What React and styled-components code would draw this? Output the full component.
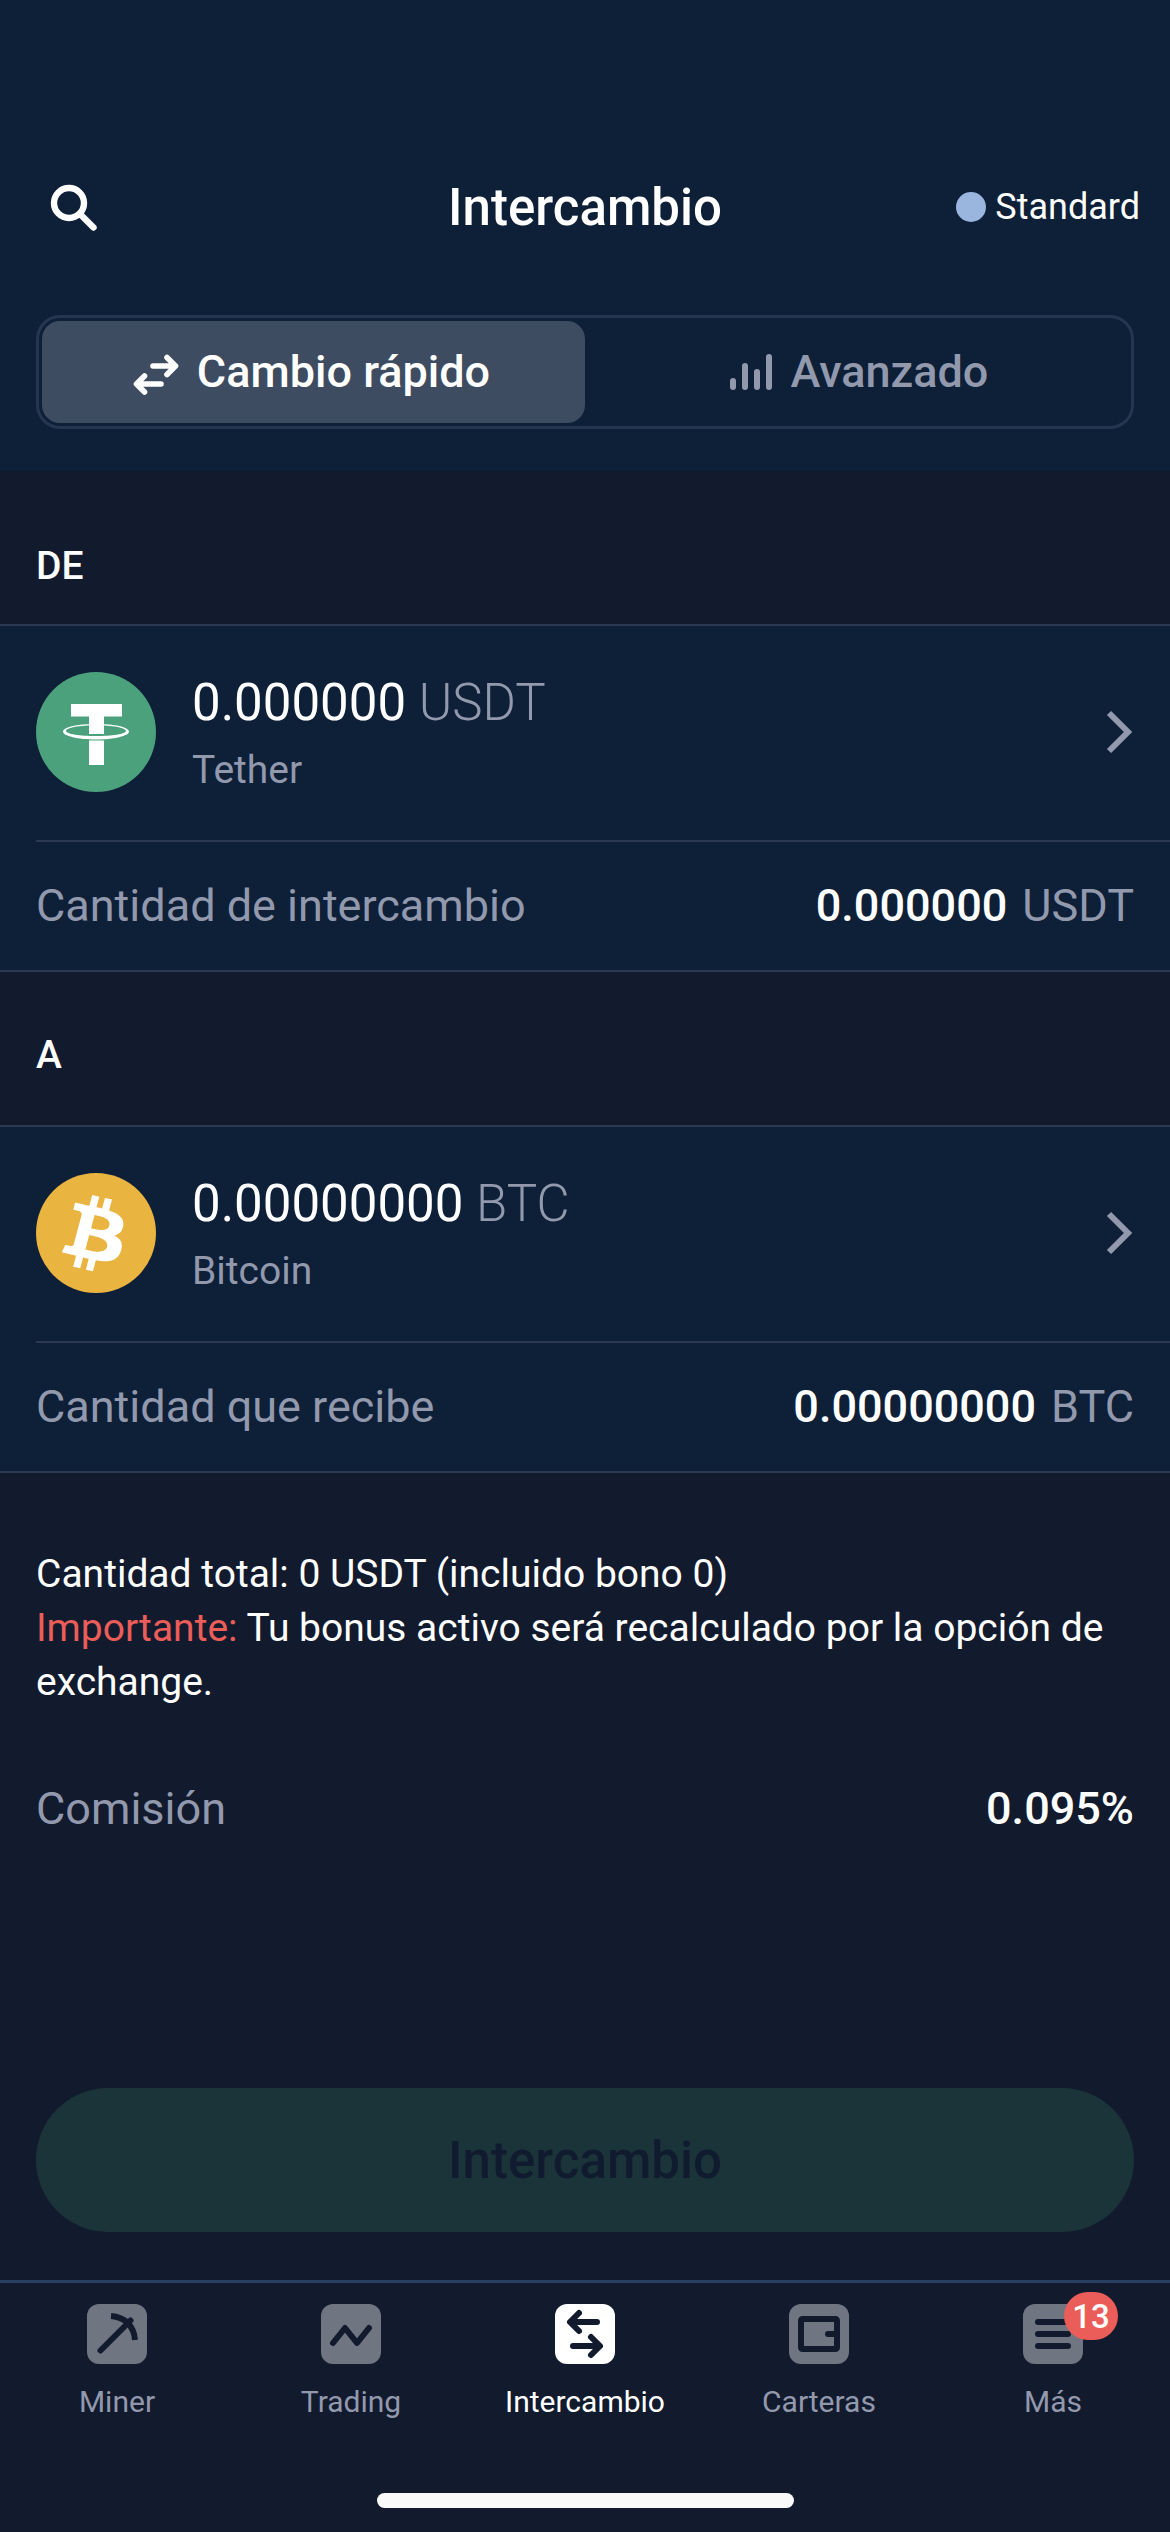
import React from "react"
import styled, { createGlobalStyle } from "styled-components"

const colors = {
  page: "#121a2e",
  panel: "#0e1f38",
  line: "#2b3a52",
  muted: "#9299ad",
  white: "#ffffff",
  red: "#eb5d58",
}

const GlobalStyle = createGlobalStyle`
  * {
    box-sizing: border-box;
  }
  body {
    margin: 0;
    background: ${colors.page};
    color: ${colors.white};
    font-family: Roboto, sans-serif;
  }
  svg {
    display: block;
    flex: none;
  }
`

const Screen = styled.div`
  width: 1170px;
  height: 2532px;
  display: flex;
  flex-direction: column;
  background: ${colors.page};
  overflow: hidden;
`
const Header = styled.header`
  height: 471px;
  padding: 141px 36px 42px;
  display: flex;
  flex-direction: column;
  justify-content: space-between;
  background: ${colors.panel};
`
const TitleBar = styled.div`
  height: 132px;
  display: grid;
  grid-template-columns: 1fr auto 1fr;
  align-items: center;
`
const SearchButton = styled.button`
  padding: 0 0 0 12px;
  border: 0;
  background: none;
  color: inherit;
`
const Title = styled.h1`
  margin: 0;
  padding-top: 2px;
  font-size: 51px;
  line-height: 60px;
  font-weight: 500;
`
const Plan = styled.div`
  display: flex;
  align-items: center;
  justify-content: flex-end;
  gap: 9px;
  margin-right: -6px;
  font-size: 36px;
  line-height: 42px;
`
const PlanDot = styled.span`
  width: 30px;
  height: 30px;
  border-radius: 50%;
  background: #9ab6df;
`
const Segments = styled.div`
  height: 114px;
  padding: 3px;
  display: grid;
  grid-template-columns: 1fr 1fr;
  border: 3px solid #253650;
  border-radius: 24px;
`
const Segment = styled.button`
  display: flex;
  align-items: center;
  justify-content: center;
  gap: 18px;
  padding: ${(p) => (p.$active ? "0 4px 0 0" : "0 0 0 5px")};
  border: 0;
  border-radius: 18px;
  background: ${(p) => (p.$active ? "#3e4c61" : "transparent")};
  color: ${(p) => (p.$active ? colors.white : colors.muted)};
  font: 500 45px/54px Roboto, sans-serif;
`
const SectionTitle = styled.h2`
  margin: 0;
  height: 153px;
  padding: ${(p) => p.$top}px 36px 0;
  font-size: 39px;
  line-height: 46px;
  font-weight: 500;
`
const Panel = styled.section`
  height: 348px;
  padding-left: 36px;
  border-top: 2px solid ${colors.line};
  border-bottom: 2px solid ${colors.line};
  background: ${colors.panel};
`
const CoinRow = styled.div`
  height: 216px;
  padding: 0 36px 2px 0;
  display: flex;
  align-items: center;
  gap: 36px;
  border-bottom: 2px solid ${colors.line};
`
const CoinText = styled.div`
  flex: 1;
  padding-top: 5px;
`
const Balance = styled.div`
  font-size: 51px;
  line-height: 60px;
  white-space: pre;
`
const Ticker = styled.span`
  color: ${colors.muted};
  font-weight: ${(p) => p.$weight || 400};
`
const CoinName = styled.div`
  margin-top: 10px;
  color: ${colors.muted};
  font-size: 39px;
  line-height: 54px;
`
const ValueRow = styled.div`
  height: 128px;
  padding-right: 36px;
  display: flex;
  align-items: center;
  justify-content: space-between;
  font-size: 45px;
  line-height: 54px;
`
const Label = styled.span`
  color: ${colors.muted};
`
const Value = styled.span`
  display: flex;
  gap: 15px;
  font-weight: 500;
`
const Note = styled.p`
  margin: 0;
  padding: 74px 36px 0;
  font-size: 39px;
  line-height: 54px;
`
const Warning = styled.span`
  color: ${colors.red};
`
const FeeRow = styled(ValueRow)`
  height: 54px;
  margin: 73px 0 0 36px;
`
const SubmitButton = styled.button`
  margin: auto 36px 48px;
  padding: 2px 0 0;
  height: 144px;
  flex: none;
  border: 0;
  border-radius: 72px;
  background: #1b343a;
  color: #111b30;
  font: 500 51px/60px Roboto, sans-serif;
`
const TabBar = styled.nav`
  height: 252px;
  flex: none;
  display: flex;
  flex-direction: column;
  align-items: center;
  justify-content: space-between;
  padding-bottom: 24px;
  border-top: 3px solid #283f62;
`
const Tabs = styled.div`
  width: 100%;
  padding-top: 21px;
  display: grid;
  grid-template-columns: repeat(5, 1fr);
`
const Tab = styled.div`
  display: flex;
  flex-direction: column;
  align-items: center;
  gap: 20px;
  color: ${(p) => (p.$active ? colors.white : colors.muted)};
  font-size: 30px;
  line-height: 36px;
`
const TabIcon = styled.div`
  position: relative;
  width: 60px;
  height: 60px;
  border-radius: 12px;
  background: ${(p) => (p.$active ? colors.white : "#707582")};
  color: ${colors.page};
`
const Badge = styled.span`
  position: absolute;
  top: -12px;
  left: 41px;
  width: 54px;
  height: 48px;
  border-radius: 24px;
  background: ${colors.red};
  color: ${colors.white};
  font-size: 33px;
  line-height: 50px;
  font-weight: 500;
  text-align: center;
`
const HomeIndicator = styled.div`
  width: 417px;
  height: 15px;
  border-radius: 8px;
  background: #f9f9f9;
`

const stroke = {
  fill: "none",
  stroke: "currentColor",
  strokeLinecap: "round",
  strokeLinejoin: "round",
}

const SearchIcon = () => (
  <svg width="51" height="51" viewBox="0 0 51 51" {...stroke}>
    <circle cx="21" cy="21" r="15" strokeWidth="6.4" />
    <path d="M32 32L45.5 45.5" strokeWidth="6.4" />
  </svg>
)

const SwapIcon = () => (
  <svg width="46" height="46" viewBox="0 0 46 46" strokeWidth="5.6" {...stroke}>
    <path d="M20 17H42M34 8.5L42.5 17L34 25.5" />
    <path d="M28 35H4M11.5 27L3.5 35L11.5 43" />
  </svg>
)

const BarsIcon = () => (
  <svg width="43" height="36" viewBox="0 0 43 36" strokeWidth="6" {...stroke}>
    <path d="M3 27V33M15 12V33M27 18V33M39 3V33" />
  </svg>
)

const Chevron = () => (
  <svg width="28" height="44" viewBox="0 0 28 44">
    <path
      d="M3 3L22 22L3 41"
      fill="none"
      stroke={colors.muted}
      strokeWidth="6"
    />
  </svg>
)

const TetherIcon = () => (
  <svg width="120" height="120" viewBox="0 0 120 120">
    <circle cx="60" cy="60" r="60" fill="#4ba17c" />
    <path d="M35 32H86V44.5H68V62H53V44.5H35Z" fill="#fff" />
    <path
      fill="#fff"
      fillRule="evenodd"
      d="M60 52C78 52 93 55 93 59.5C93 64 78 67.5 60 67.5C42 67.5 27 64 27 59.5C27 55 42 52 60 52ZM60 53.2C44 53.2 30 55.500 30 59C30 62 44 64 60 64C76 64 90 62 90 59C90 55.5 76 53.2 60 53.2Z"
    />
    <path d="M53 68.5H68V93H53Z" fill="#fff" />
  </svg>
)

const BitcoinIcon = () => (
  <svg width="120" height="120" viewBox="0 0 32 32">
    <circle cx="16" cy="16" r="16" fill="#eab440" />
    <path
      fill="#fff"
      transform="translate(-2 -.25) scale(1.09 1.02)"
      d="M23.189 14.020c.314-2.096-1.283-3.223-3.465-3.975l.708-2.840-1.728-.430-.690 2.765c-.454-.114-.920-.220-1.385-.326l.695-2.783L15.596 6l-.708 2.839c-.376-.086-.746-.170-1.104-.260l.002-.009-2.384-.595-.460 1.846s1.283.294 1.256.312c.700.175.826.638.805 1.006l-.806 3.235c.048.012.110.030.180.057l-.183-.045-1.130 4.532c-.086.212-.303.531-.793.410.018.025-1.256-.313-1.256-.313l-.858 1.978 2.250.561c.418.105.828.215 1.231.318l-.715 2.872 1.727.430.708-2.840c.472.127.930.245 1.378.357l-.706 2.828 1.728.430.715-2.866c2.948.558 5.164.333 6.097-2.333.752-2.146-.037-3.385-1.588-4.192 1.130-.260 1.980-1.003 2.207-2.538zm-3.950 5.538c-.533 2.147-4.148.986-5.320.695l.950-3.805c1.172.293 4.929.872 4.370 3.110zm.535-5.569c-.487 1.953-3.495.960-4.470.717l.860-3.450c.975.243 4.118.696 3.610 2.733z"
    />
  </svg>
)

const tabIconProps = {
  width: 60,
  height: 60,
  viewBox: "0 0 60 60",
  strokeWidth: 6,
  ...stroke,
}

const MinerIcon = () => (
  <svg {...tabIconProps}>
    <path d="M13.5 46.5L43.5 16.5" />
    <path d="M24 12C38 13 47 22 48 36" strokeLinecap="butt" />
  </svg>
)

const TradingIcon = () => (
  <svg {...tabIconProps}>
    <path d="M12 39L24 24L36 39L48 24" />
  </svg>
)

const ExchangeIcon = () => (
  <svg {...tabIconProps}>
    <path d="M42 18H16M24 9L15 18L24 27M18 42H44M36 33L45 42L36 51" />
  </svg>
)

const WalletIcon = () => (
  <svg {...tabIconProps}>
    <rect x="12" y="15" width="36" height="30" rx="1.5" />
    <path d="M39 30H48" />
  </svg>
)

const MenuIcon = () => (
  <svg {...tabIconProps}>
    <path d="M15 18H45M15 30H45M15 42H45" />
  </svg>
)

const tabs = [
  { label: "Miner", icon: <MinerIcon /> },
  { label: "Trading", icon: <TradingIcon /> },
  { label: "Intercambio", icon: <ExchangeIcon />, active: true },
  { label: "Carteras", icon: <WalletIcon /> },
  { label: "Más", icon: <MenuIcon />, badge: 13 },
]

const CoinPanel = ({ icon, amount, ticker, name, label }) => (
  <Panel>
    <CoinRow>
      {icon}
      <CoinText>
        <Balance>
          {amount} <Ticker $weight={300}>{ticker}</Ticker>
        </Balance>
        <CoinName>{name}</CoinName>
      </CoinText>
      <Chevron />
    </CoinRow>
    <ValueRow>
      <Label>{label}</Label>
      <Value>
        {amount}
        <Ticker>{ticker}</Ticker>
      </Value>
    </ValueRow>
  </Panel>
)

const App = () => (
  <Screen>
    <GlobalStyle />
    <Header>
      <TitleBar>
        <SearchButton>
          <SearchIcon />
        </SearchButton>
        <Title>Intercambio</Title>
        <Plan>
          <PlanDot />
          Standard
        </Plan>
      </TitleBar>
      <Segments>
        <Segment $active>
          <SwapIcon />
          Cambio rápido
        </Segment>
        <Segment>
          <BarsIcon />
          Avanzado
        </Segment>
      </Segments>
    </Header>
    <SectionTitle $top={72}>DE</SectionTitle>
    <CoinPanel
      icon={<TetherIcon />}
      amount="0.000000"
      ticker="USDT"
      name="Tether"
      label="Cantidad de intercambio"
    />
    <SectionTitle $top={60}>A</SectionTitle>
    <CoinPanel
      icon={<BitcoinIcon />}
      amount="0.00000000"
      ticker="BTC"
      name="Bitcoin"
      label="Cantidad que recibe"
    />
    <Note>
      Cantidad total: 0 USDT (incluido bono 0)
      <br />
      <Warning>Importante:</Warning> Tu bonus activo será recalculado por la
      opción de exchange.
    </Note>
    <FeeRow>
      <Label>Comisión</Label>
      <Value>0.095%</Value>
    </FeeRow>
    <SubmitButton>Intercambio</SubmitButton>
    <TabBar>
      <Tabs>
        {tabs.map((tab) => (
          <Tab key={tab.label} $active={tab.active}>
            <TabIcon $active={tab.active}>
              {tab.icon}
              {tab.badge && <Badge>{tab.badge}</Badge>}
            </TabIcon>
            {tab.label}
          </Tab>
        ))}
      </Tabs>
      <HomeIndicator />
    </TabBar>
  </Screen>
)

export default App
